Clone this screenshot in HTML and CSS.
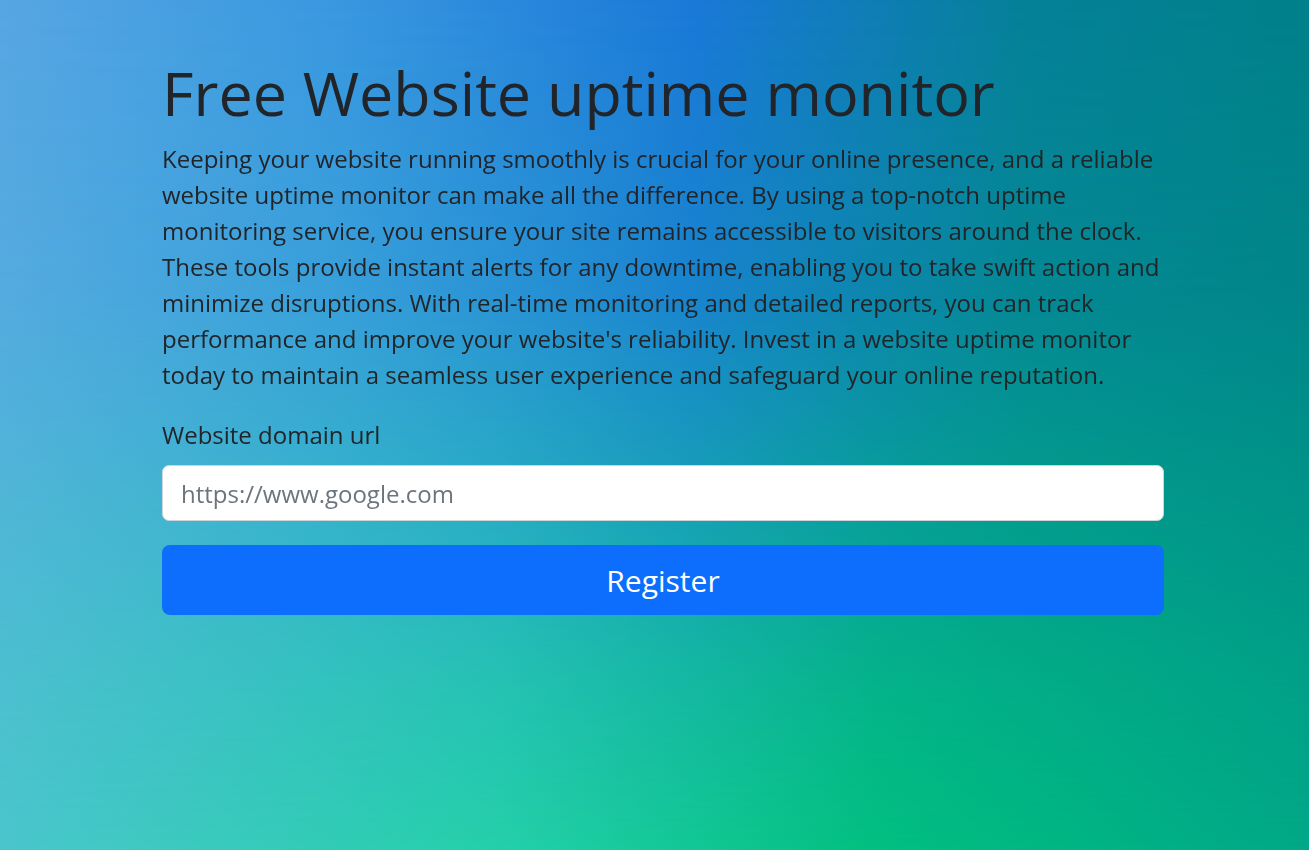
FILE: index.html
```html
<!DOCTYPE html>
<html lang="en">
<head>
<meta charset="utf-8">
<title>Free Website uptime monitor</title>
<link rel="stylesheet" href="styles.css">
</head>
<body>
<main class="page">
  <h1 class="title">Free Website uptime monitor</h1>
  <p class="intro">Keeping your website running smoothly is crucial for your online presence, and a reliable website uptime monitor can make all the difference. By using a top-notch uptime monitoring service, you ensure your site remains accessible to visitors around the clock. These tools provide instant alerts for any downtime, enabling you to take swift action and minimize disruptions. With real-time monitoring and detailed reports, you can track performance and improve your website's reliability. Invest in a website uptime monitor today to maintain a seamless user experience and safeguard your online reputation.</p>
  <form class="form" onsubmit="return false">
    <label class="label" for="url">Website domain url</label>
    <input class="input" id="url" type="text" placeholder="https://www.google.com">
    <button class="button" type="submit">Register</button>
  </form>
</main>
</body>
</html>
```

FILE: styles.css
```css
html, body {
  margin: 0;
  padding: 0;
  min-height: 100%;
}

body {
  min-height: 100vh;
  font-family: "Open Sans", "Noto Sans", sans-serif;
  color: #212529;
  background: linear-gradient(to right, #4ac6cc 0%, #24d0aa 38%, #02c080 67%, #00a888 100%);
}

body::before {
  content: "";
  position: fixed;
  inset: 0;
  z-index: -1;
  background: linear-gradient(to right, #56a6e2 0%, #3a98e0 25%, #1a78d8 53%, #058098 78%, #00808a 100%);
  -webkit-mask-image: linear-gradient(to bottom, #000 0%, rgba(0,0,0,0.85) 35%, rgba(0,0,0,0.2) 80%, transparent 100%);
  mask-image: linear-gradient(to bottom, #000 0%, rgba(0,0,0,0.85) 35%, rgba(0,0,0,0.2) 80%, transparent 100%);
}

.page {
  width: 1002px;
  padding: 57px 0 0 162px;
}

.title {
  margin: 0 0 12px;
  font-size: 61px;
  font-weight: 400;
  line-height: 72px;
}

.intro {
  margin: 0;
  font-size: 24px;
  line-height: 36px;
}

.form {
  display: flex;
  flex-direction: column;
  padding-top: 24px;
}

.label {
  font-size: 24px;
  line-height: 36px;
  margin-bottom: 12px;
}

.input {
  box-sizing: border-box;
  height: 56px;
  padding: 8px 18px;
  font-family: inherit;
  font-size: 24px;
  color: #212529;
  background: #fff;
  border: 1px solid #ced4da;
  border-radius: 7px;
  outline: none;
}

.input::placeholder {
  color: #6c757d;
}

.button {
  margin-top: 24px;
  height: 70px;
  font-family: inherit;
  font-size: 30px;
  color: #fff;
  background: #0d6efd;
  border: 0;
  border-radius: 8px;
  cursor: pointer;
}
```
